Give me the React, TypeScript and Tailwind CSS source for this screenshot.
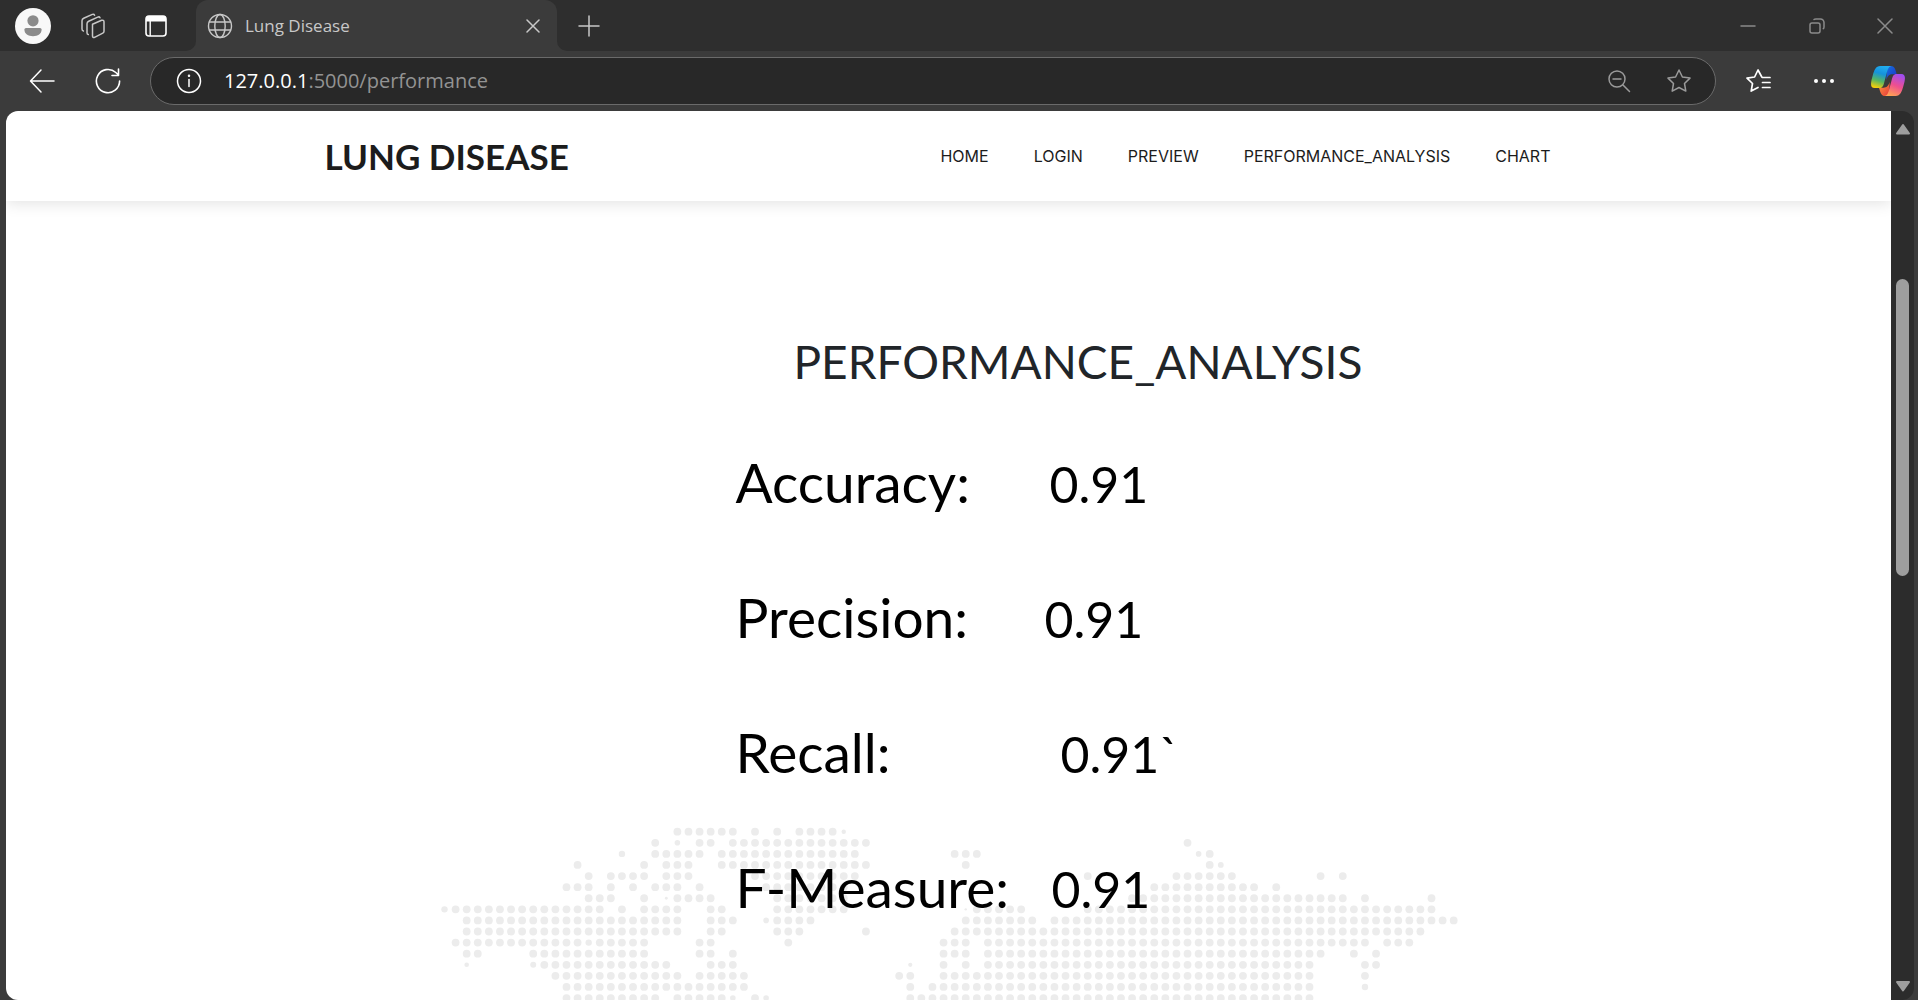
import React from "react";

type Run = [number, number];

/* Dotted world map: runs of full dots per row, in grid columns. */
const MAP_ROWS: Run[][] = [
  [[21, 26], [28, 28], [30, 30], [32, 35]],
  [[19, 19], [23, 24], [26, 38], [67, 67]],
  [[19, 23], [25, 37], [46, 48], [69, 69]],
  [[12, 12], [18, 18], [20, 22], [25, 38], [47, 47], [69, 69]],
  [[13, 13], [15, 18], [20, 22], [28, 37], [58, 58], [66, 71], [79, 79], [81, 81]],
  [[11, 13], [15, 15], [17, 17], [19, 21], [23, 23], [29, 36], [64, 73], [75, 75]],
  [[13, 15], [18, 18], [21, 24], [30, 36], [62, 81], [83, 83], [89, 89]],
  [[1, 14], [16, 16], [18, 21], [24, 25], [30, 36], [48, 52], [58, 89]],
  [[2, 21], [24, 26], [30, 33], [47, 53], [55, 91]],
  [[2, 21], [24, 25], [30, 32], [38, 38], [46, 88]],
  [[1, 12], [14, 18], [23, 24], [31, 31], [45, 47], [49, 83], [85, 87]],
  [[2, 3], [8, 18], [23, 24], [26, 26], [45, 47], [49, 79], [82, 82], [84, 84]],
  [[9, 20], [24, 26], [45, 45], [47, 47], [49, 78], [83, 84]],
  [[10, 21], [23, 27], [41, 42], [45, 78], [83, 83]],
  [[11, 27], [42, 42], [44, 78]],
  [[11, 19], [21, 25], [28, 28], [42, 78]],
];

/* Smaller dots: column, row, radius. */
const SMALL_DOTS: [number, number, number][] = [
  [36, 0, 2.2], [21, 1, 2.8], [16, 2, 3.2], [68, 2, 2.8], [70, 3, 2.9], [20, 6, 1.4],
  [0, 7, 3.2], [47, 7, 1.2], [29, 8, 2.8], [13, 10, 3.2], [2, 12, 2.3], [8, 12, 3],
  [42, 12, 2.1], [83, 14, 3.2], [26, 15, 2.8], [29, 15, 2.8],
];

const PITCH = 11.09;

function WorldMap() {
  return (
    <svg width="1018" height="174" viewBox="0 0 1018 174" fill="#ececec" aria-hidden="true">
      {MAP_ROWS.map((runs, row) =>
        runs.flatMap(([from, to]) =>
          Array.from({ length: to - from + 1 }, (_, i) => (
            <circle key={`${row}-${from + i}`} cx={4.5 + (from + i) * PITCH} cy={5.7 + row * PITCH} r="3.9" />
          )),
        ),
      )}
      {SMALL_DOTS.map(([col, row, r]) => (
        <circle key={`s${row}-${col}`} cx={4.5 + col * PITCH} cy={5.7 + row * PITCH} r={r} />
      ))}
    </svg>
  );
}

function Icon({ size = 24, width = 1.5, children }: { size?: number; width?: number; children: React.ReactNode }) {
  return (
    <svg
      width={size}
      height={size}
      viewBox={`0 0 ${size} ${size}`}
      fill="none"
      stroke="currentColor"
      strokeWidth={width}
      strokeLinecap="round"
      strokeLinejoin="round"
      aria-hidden="true"
      className="shrink-0"
    >
      {children}
    </svg>
  );
}

function IconButton({ label, className, children }: { label: string; className: string; children: React.ReactNode }) {
  return (
    <button type="button" aria-label={label} className={`flex shrink-0 items-center justify-center ${className}`}>
      {children}
    </button>
  );
}

function Copilot() {
  return (
    <svg width="34" height="30" viewBox="0 0 102 90" aria-hidden="true">
      <defs>
        <linearGradient id="cool" x1="0.6" y1="0" x2="0.3" y2="1">
          <stop offset="0" stopColor="#22aef0" />
          <stop offset="0.35" stopColor="#1593dc" />
          <stop offset="0.68" stopColor="#57b662" />
          <stop offset="1" stopColor="#f6cf0a" />
        </linearGradient>
        <linearGradient id="warm" x1="0.7" y1="0" x2="0.3" y2="1">
          <stop offset="0" stopColor="#a04df0" />
          <stop offset="0.5" stopColor="#ef4f8f" />
          <stop offset="1" stopColor="#ffa552" />
        </linearGradient>
        <linearGradient id="fold" x1="0" y1="0" x2="1" y2="1">
          <stop offset="0" stopColor="#1673e0" />
          <stop offset="1" stopColor="#1b30c4" />
        </linearGradient>
        <linearGradient id="ember" x1="0" y1="0" x2="1" y2="1">
          <stop offset="0" stopColor="#ff9a3d" />
          <stop offset="1" stopColor="#e5383c" />
        </linearGradient>
      </defs>
      <path d="M48 0H60C70 0 73 8 77 25H64C55 25 50 30 46 42Z" fill="url(#fold)" />
      <path d="M54 90H42C32 90 29 82 24 65H38C47 65 52 60 56 48Z" fill="url(#ember)" />
      <path d="M28 0C14 0 10 12 5 29C0 47-5 66 11 66H25C34 66 37 60 40 48L47 22C50 8 54 0 64 0Z" fill="url(#cool)" />
      <path d="M74 90C88 90 92 78 97 61C102 43 107 24 91 24H77C68 24 65 30 62 42L55 68C52 82 48 90 38 90Z" fill="url(#warm)" />
    </svg>
  );
}

function TabStrip() {
  return (
    <div className="flex h-[51px] shrink-0 items-center bg-[#2e2e2e] text-[#c8c8c8]">
      <IconButton label="Profile" className="ml-[15px] size-9">
        <svg width="36" height="36" viewBox="0 0 36 36" aria-hidden="true">
          <circle cx="18" cy="18" r="18" fill="#f8f8f8" />
          <circle cx="18" cy="12.8" r="5.6" fill="#8b8b8b" />
          <path d="M11 20h14a1.6 1.6 0 0 1 1.6 1.6c0 4.4-3.8 6.600-8.600 6.600s-8.600-2.200-8.600-6.600A1.600 1.600 0 0 1 11 20Z" fill="#8b8b8b" />
        </svg>
      </IconButton>
      <IconButton label="Workspaces" className="ml-6 size-9">
        <Icon size={28}>
          <path d="M13.500 12.300 22.600 8.300c1.200-.5 2.400.2 2.400 1.500v9.400c0 .9-.4 1.500-1.200 1.900l-8.200 4.200c-1.100.5-2.100-.1-2.100-1.300V12.300Z" />
          <path d="M9.300 22.500c-.9-.2-1.300-.9-1.300-1.800V11.800c0-1.200.6-2 1.700-2.500l9-4.200c1-.4 1.900-.2 2.300.7" />
          <path d="M4.400 19c-1-.2-1.400-1-1.400-2V8.800c0-1.200.6-2 1.700-2.500l8.600-3.900c1-.4 1.900-.1 2.300.8" />
        </Icon>
      </IconButton>
      <IconButton label="Tab actions" className="ml-[27px] size-9 text-white">
        <svg width="22" height="22" viewBox="0 0 22 22" aria-hidden="true">
          <rect x="1" y="1" width="20" height="20" rx="3" fill="none" stroke="currentColor" strokeWidth="1.600" />
          <path d="M1 4a3 3 0 0 1 3-3h14a3 3 0 0 1 3 3v2.500H1Z" fill="currentColor" />
          <path d="M5.200 6v15" stroke="currentColor" strokeWidth="1.400" />
        </svg>
      </IconButton>
      <span className="ml-3 size-2.5 shrink-0 self-end bg-[#3b3b3b]">
        <span className="block size-full rounded-br-full bg-[#2e2e2e]" />
      </span>
      <div className="flex h-full w-[361px] shrink-0 items-center rounded-t-xl bg-[#3b3b3b] pl-[11px]">
        <Icon size={26} width={1.4}>
          <circle cx="13" cy="13" r="11.500" />
          <ellipse cx="13" cy="13" rx="5.200" ry="11.500" />
          <path d="M2.500 9h21M2.500 17h21" />
        </Icon>
        <span className="ml-3 grow font-['Open_Sans','Noto_Sans',sans-serif] text-[17px] leading-6">Lung Disease</span>
        <IconButton label="Close tab" className="mr-2.5 size-7">
          <Icon size={14}>
            <path d="M1 1l12 12M13 1 1 13" />
          </Icon>
        </IconButton>
      </div>
      <span className="size-2.5 shrink-0 self-end bg-[#3b3b3b]">
        <span className="block size-full rounded-bl-full bg-[#2e2e2e]" />
      </span>
      <IconButton label="New tab" className="ml-1.5 size-8">
        <Icon size={22}>
          <path d="M11 1v20M1 11h20" />
        </Icon>
      </IconButton>
      <div className="ml-auto flex items-center text-[#8b8b8b]">
        <IconButton label="Minimize" className="h-10 w-[69px]">
          <Icon size={16}>
            <path d="M1 8h14" />
          </Icon>
        </IconButton>
        <IconButton label="Restore" className="h-10 w-[69px]">
          <Icon size={16}>
            <rect x="1" y="5" width="10" height="10" rx="2" />
            <path d="M5 1.500C5.500 1 6 1 7 1h4.500A3.500 3.500 0 0 1 15 4.500V9c0 1-.1 1.300-.7 1.700" />
          </Icon>
        </IconButton>
        <IconButton label="Close" className="h-10 w-[67px]">
          <Icon size={16}>
            <path d="M1 1l14 14M15 1 1 15" />
          </Icon>
        </IconButton>
      </div>
    </div>
  );
}

const STAR = "M13 2l3.400 7 7.600 1.100-5.500 5.400 1.300 7.600L13 19.500l-6.800 3.600 1.300-7.600L2 10.100 9.600 9Z";

function Toolbar() {
  return (
    <div className="flex h-[60px] shrink-0 items-center bg-[#3b3b3b] text-white">
      <IconButton label="Back" className="ml-6 size-9">
        <Icon size={26}>
          <path d="M25 13H2M12 2 1.500 13 12 24" />
        </Icon>
      </IconButton>
      <IconButton label="Refresh" className="ml-[30px] size-9">
        <Icon size={26} width={1.600}>
          <path d="M24.600 13A11.600 11.600 0 1 1 20.800 4.500L23.500 7M23.500 1v6.500h-6.500" />
        </Icon>
      </IconButton>
      <div className="ml-6 flex h-12 grow items-center rounded-full border border-[#6a6a6a] bg-[#282828] pr-[18px] pl-[25px]">
        <Icon size={26} width={1.500}>
          <circle cx="13" cy="13" r="11.500" />
          <path d="M13 11.500v7" />
          <circle cx="13" cy="7.800" r=".5" fill="currentColor" />
        </Icon>
        <a
          href="#performance"
          className="ml-[22px] grow font-['Open_Sans','Noto_Sans',sans-serif] text-[20px] leading-7 text-[#939393]"
        >
          <span className="text-white">127.0.0.1</span>:5000/performance
        </a>
        <IconButton label="Zoom" className="size-9 text-[#9a9a9a]">
          <Icon size={24}>
            <circle cx="10" cy="10" r="8" />
            <path d="M6 10h8M16 16l6.500 6.500" />
          </Icon>
        </IconButton>
        <IconButton label="Add to favorites" className="ml-6 size-9 text-[#9a9a9a]">
          <Icon size={26}>
            <path d={STAR} />
          </Icon>
        </IconButton>
      </div>
      <IconButton label="Favorites" className="ml-6 size-9">
        <Icon size={26} width={1.700}>
          <path d="M16.800 9 13 2 9.600 9 2 10.100l5.500 5.400-1.300 7.600L13 19.500M17.500 9.500H25M17.500 14.500H25M17.500 19.500H25" />
        </Icon>
      </IconButton>
      <IconButton label="Settings and more" className="ml-[30px] size-9">
        <svg width="22" height="6" viewBox="0 0 22 6" fill="currentColor" aria-hidden="true">
          <circle cx="3" cy="3" r="2" />
          <circle cx="11" cy="3" r="2" />
          <circle cx="19" cy="3" r="2" />
        </svg>
      </IconButton>
      <IconButton label="Copilot" className="mr-3 ml-7 size-9">
        <Copilot />
      </IconButton>
    </div>
  );
}

const LINKS = ["HOME", "LOGIN", "PREVIEW", "PERFORMANCE_ANALYSIS", "CHART"];

const METRICS = [
  { label: "Accuracy:", value: "0.91", column: "w-[314px]" },
  { label: "Precision:", value: "0.91", column: "w-[309px]" },
  { label: "Recall:", value: "0.91`", column: "w-[325px]" },
  { label: "F-Measure:", value: "0.91", column: "w-[316px]" },
];

function Page() {
  return (
    <div className="relative flex grow flex-col overflow-hidden rounded-l-xl bg-white">
      <header className="relative shrink-0 shadow-[0_2px_15px_rgba(0,0,0,0.12)]">
        <div className="mx-auto flex h-[90px] max-w-[1248px] items-center justify-between pr-[22px]">
          <a href="#home" className="font-['Lato',sans-serif] text-[35px] leading-10 font-bold text-[#1c1c1c]">
            LUNG DISEASE
          </a>
          <nav className="flex gap-[45px] font-['Inter',sans-serif] text-[16px] leading-6 text-[#1c1c1c]">
            {LINKS.map((link) => (
              <a key={link} href={`#${link.toLowerCase()}`}>
                {link}
              </a>
            ))}
          </nav>
        </div>
      </header>
      <div className="absolute inset-x-0 bottom-0 flex h-[174px] justify-center">
        <WorldMap />
      </div>
      <main className="relative mx-auto w-full max-w-[1254px] pt-[134px] pl-[414px] font-['Lato',sans-serif]">
        <h1 className="pl-[58px] text-[46px] leading-[54px] text-[#212529]">PERFORMANCE_ANALYSIS</h1>
        <dl className="mt-[26px] text-[55px] leading-[135px] text-black">
          {METRICS.map(({ label, value, column }) => (
            <div key={label} className="flex h-[135px] items-baseline">
              <dt className={`shrink-0 ${column}`}>{label}</dt>
              <dd className="text-[50px]">{value}</dd>
            </div>
          ))}
        </dl>
      </main>
    </div>
  );
}

function Scrollbar() {
  return (
    <div className="flex w-[23px] shrink-0 flex-col items-center justify-between rounded-r-xl bg-[#2c2c2c] pt-3 pb-2 text-[#9e9e9e]">
      <svg width="16" height="12" viewBox="0 0 16 12" fill="currentColor" stroke="currentColor" strokeWidth="2" strokeLinejoin="round" aria-hidden="true">
        <path d="M8 2l6 8.500H2Z" />
      </svg>
      <div className="mt-36 mb-auto h-[297px] w-[13px] rounded-full bg-[#9e9e9e]" />
      <svg width="16" height="12" viewBox="0 0 16 12" fill="currentColor" stroke="currentColor" strokeWidth="2" strokeLinejoin="round" aria-hidden="true">
        <path d="M8 10.500 2 2h12Z" />
      </svg>
    </div>
  );
}

export default function App() {
  return (
    <div className="flex h-screen flex-col overflow-hidden bg-[#3b3b3b]">
      <TabStrip />
      <Toolbar />
      <div className="flex min-h-0 grow pr-1 pl-1.5">
        <Page />
        <Scrollbar />
      </div>
    </div>
  );
}
